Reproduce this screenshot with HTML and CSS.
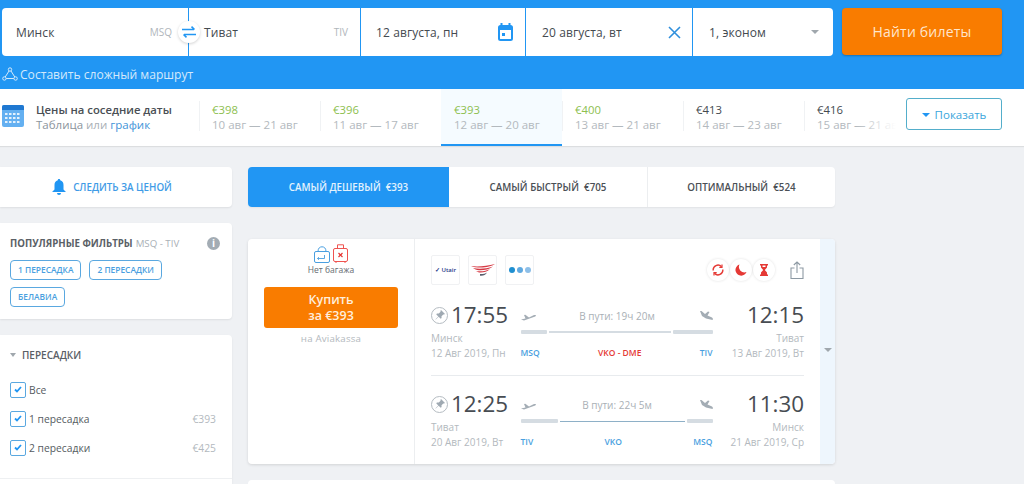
FILE: index.html
```html
<!DOCTYPE html>
<html>
<head>
<title>Минск - Тиват</title>
<link rel="stylesheet" href="styles.css">
</head>
<body>

<header class="search">
    <div class="search-row">
        <div class="fields">
            <div class="field f-from"><span class="city">Минск</span><span class="iata">MSQ</span></div>
            <div class="field f-to"><span class="city">Тиват</span><span class="iata">TIV</span>
                <div class="swap">
                    <svg width="14" height="12" viewBox="0 0 14 12" fill="none" stroke="#2196f3" stroke-width="1.6"><path d="M0 3.5h12M9.5 .6L12.5 3.5"/><path d="M14 8.5H2M4.5 11.4L1.5 8.5"/></svg>
                </div>
            </div>
            <div class="field f-date"><span class="city">12 августа, пн</span>
                <svg width="15" height="18" viewBox="0 0 15 18" fill="none"><rect x="1" y="3" width="13" height="14" rx="1.5" stroke="#2196f3" stroke-width="2"/><path d="M1 4h13v3H1z" fill="#2196f3"/><path d="M3.5 0v3M11.5 0v3" stroke="#2196f3" stroke-width="2"/><rect x="4" y="10" width="3" height="3" fill="#2196f3"/></svg>
            </div>
            <div class="field f-back"><span class="city">20 августа, вт</span>
                <svg width="13" height="13" viewBox="0 0 13 13" stroke="#2f8fdc" stroke-width="1.6"><path d="M1 1l11 11M12 1L1 12"/></svg>
            </div>
            <div class="field f-pax"><span class="city">1, эконом</span><span class="caret"></span></div>
        </div>
        <button class="find">Найти билеты</button>
    </div>
    <div class="route">
        <svg width="16" height="15" viewBox="0 0 16 15" fill="none" stroke="#d4e9fb" stroke-width="1"><circle cx="8" cy="2.5" r="1.7"/><circle cx="2.4" cy="11.5" r="1.7"/><circle cx="13.6" cy="11.5" r="1.7"/><path d="M7 4L3.2 10M9 4l3.8 6M4.2 11.5h7.6"/></svg>
        <span>Составить сложный маршрут</span>
    </div>
</header>

<section class="dates">
    <div class="dates-title">
        <svg class="dates-icon" width="22" height="22" viewBox="0 0 22 22"><rect x="0" y="0" width="22" height="22" rx="2" fill="#64b0f1"/><path d="M0 2a2 2 0 0 1 2-2h18a2 2 0 0 1 2 2v3H0z" fill="#1f78d1"/><g fill="#e3f1fd"><rect x="3" y="8" width="2.5" height="2"/><rect x="7" y="8" width="2.5" height="2"/><rect x="11" y="8" width="2.5" height="2"/><rect x="15" y="8" width="2.5" height="2"/><rect x="3" y="12" width="2.5" height="2"/><rect x="7" y="12" width="2.5" height="2"/><rect x="11" y="12" width="2.5" height="2"/><rect x="15" y="12" width="2.5" height="2"/><rect x="3" y="16" width="2.5" height="2"/><rect x="7" y="16" width="2.5" height="2"/><rect x="11" y="16" width="2.5" height="2"/><rect x="15" y="16" width="2.5" height="2"/></g></svg>
        <div class="dates-text">
            <b>Цены на соседние даты</b>
            <span>Таблица <i>или</i> <a>график</a></span>
        </div>
    </div>
    <div class="date-list">
        <div class="date-item"><span class="price cheap">€398</span><span class="range">10 авг — 21 авг</span></div>
        <div class="date-item"><span class="price cheap">€396</span><span class="range">11 авг — 17 авг</span></div>
        <div class="date-item active"><span class="price cheap">€393</span><span class="range">12 авг — 20 авг</span></div>
        <div class="date-item"><span class="price cheap">€400</span><span class="range">13 авг — 21 авг</span></div>
        <div class="date-item"><span class="price">€413</span><span class="range">14 авг — 23 авг</span></div>
        <div class="date-item last"><span class="price">€416</span><span class="range">15 авг — 21 авг</span></div>
    </div>
    <button class="show"><span class="caret blue"></span>Показать</button>
</section>

<main class="content">
    <aside class="side">
        <div class="card watch">
            <svg width="14" height="16" viewBox="0 0 14 16" fill="#2196f3"><path d="M7 0c.8 0 1.2.5 1.2 1.2C10.500 1.800 11.500 3.600 11.500 6v4.500L14 13H0l2.500-2.500V6c0-2.400 1-4.200 3.300-4.800C5.800.5 6.200 0 7 0z"/><path d="M5 14h4a2 2 0 0 1-4 0z"/></svg>
            <span>СЛЕДИТЬ ЗА ЦЕНОЙ</span>
        </div>
        <div class="card popular">
            <div class="popular-head"><b>ПОПУЛЯРНЫЕ ФИЛЬТРЫ</b> <span>MSQ - TIV</span><em>i</em></div>
            <div class="tags">
                <span class="tag">1 ПЕРЕСАДКА</span>
                <span class="tag">2 ПЕРЕСАДКИ</span>
                <span class="tag">БЕЛАВИА</span>
            </div>
        </div>
        <div class="card stops">
            <div class="stops-head"><span class="caret"></span>ПЕРЕСАДКИ</div>
            <label class="check"><span class="box"><svg width="8" height="7" viewBox="0 0 8 7" fill="none" stroke="#2196f3" stroke-width="1.800"><path d="M1 3.500l2 2 4-4.500"/></svg></span>Все</label>
            <label class="check"><span class="box"><svg width="8" height="7" viewBox="0 0 8 7" fill="none" stroke="#2196f3" stroke-width="1.800"><path d="M1 3.500l2 2 4-4.500"/></svg></span>1 пересадка<i>€393</i></label>
            <label class="check"><span class="box"><svg width="8" height="7" viewBox="0 0 8 7" fill="none" stroke="#2196f3" stroke-width="1.800"><path d="M1 3.500l2 2 4-4.500"/></svg></span>2 пересадки<i>€425</i></label>
            <div class="stops-line"></div>
        </div>
    </aside>

    <div class="results">
        <div class="tabs">
            <div class="tab active">САМЫЙ ДЕШЕВЫЙ&nbsp; €393</div>
            <div class="tab mid">САМЫЙ БЫСТРЫЙ&nbsp; €705</div>
            <div class="tab opt">ОПТИМАЛЬНЫЙ&nbsp; €524</div>
        </div>

        <article class="ticket">
            <div class="buy">
                <div class="bags">
                    <svg width="16" height="17" viewBox="0 0 16 17" fill="none" stroke="#4a9fe0"><rect x=".5" y="5.500" width="15" height="11" rx="1.500"/><path d="M4 5.500C4 2 6 .8 8 .8s4 1.200 4 4.700"/><path d="M3.500 12.500h7V9M3.500 12.500l1.500-1.300M3.500 12.500l1.500 1.300" stroke-width=".9"/></svg>
                    <svg width="15" height="19" viewBox="0 0 15 19" fill="none" stroke="#ef5350"><rect x=".5" y="4.500" width="14" height="13" rx="1.500"/><path d="M4.500 4.500V.8h6v3.700M3 17.500v1.500M12 17.500v1.500"/><path d="M5.500 9l4 4M9.500 9l-4 4" stroke="#e53935" stroke-width="1.200"/></svg>
                </div>
                <div class="bag-note">Нет багажа</div>
                <button class="buy-btn">Купить<br>за €393</button>
                <div class="seller">на Aviakassa</div>
            </div>
            <div class="info">
                <div class="top-row">
                    <div class="logo"><span class="utair"><b>✓</b> Utair</span></div>
                    <div class="logo">
                        <svg width="24" height="13" viewBox="0 0 24 13" fill="none"><path d="M0 2C7 3 16 2 24 0c-3 2-9 3.500-14 3.500C6 3.500 2 3 0 2z" fill="#d63a45"/><path d="M2 4c6 1.200 13 .8 20-1.500C18 5.500 13 6.500 8 6.300 5.500 6 3.500 5 2 4z" fill="#d63a45"/><path d="M5 7c5 .8 10 .2 14-2-3 3-7 3.800-11 3.500z" fill="#d63a45"/><path d="M9 10c3 .2 5-.4 7-1.500-1.500 2.500-4 3.700-7 3.200z" fill="#5a5f6e"/></svg>
                    </div>
                    <div class="logo dots"><i></i><i></i><i></i></div>
                    <div class="marks">
                        <span class="mark"><svg width="12" height="12" viewBox="0 0 12 12" fill="none" stroke="#e53935" stroke-width="1.400"><path d="M1.200 6.500A4.800 4.800 0 0 1 9.500 2.700M10.800 5.500A4.800 4.800 0 0 1 2.500 9.300"/><path d="M10 .5v2.800H7.300M2 11.500V8.700h2.700" stroke-width="1.200"/></svg></span>
                        <span class="mark"><svg width="12" height="12" viewBox="0 0 12 12" fill="#e53935"><path d="M4.500.5a5.700 5.700 0 1 0 7 7.500A5.500 5.500 0 0 1 4.500.5z"/></svg></span>
                        <span class="mark"><svg width="10" height="12" viewBox="0 0 10 12" fill="#e53935"><path d="M1 0h8v1.500H8V3.500L5.800 6 8 8.500v2h1V12H1v-1.500h1v-2L4.200 6 2 3.500v-2H1z"/><path d="M3.500 1.500h3v1.500h-3z" fill="#fff"/></svg></span>
                    </div>
                    <svg class="share" width="14" height="18" viewBox="0 0 14 18" fill="none" stroke="#8d99a3" stroke-width="1.100"><path d="M4.500 7H1v10.500h12V7H9.500M7 12V1M3.800 4L7 1l3.200 3"/></svg>
                </div>

                <div class="leg">
                    <div class="end">
                        <div class="time"><span class="pin"><svg width="12" height="12" viewBox="0 0 12 12" fill="#9fa9b2"><path d="M7 1l4 4-1 .6-.7-.2L7.500 7.200 7.600 9 6.700 9.800 4.600 7.700 1.800 10.500 1.500 10.200 4.300 7.400 2.200 5.300 3 4.400l1.800.1L6.600 2.700 6.400 2z"/></svg></span>17:55</div>
                        <div class="sub">Минск</div>
                        <div class="sub">12 Авг 2019, Пн</div>
                    </div>
                    <div class="path">
                        <div class="path-top">
                            <svg width="15" height="9" viewBox="0 0 15 9" fill="#a4adb5"><path d="M0 7.500l1-.3 3.500-.7L3 3l1.300-.2L8 5.500l4.500-2.200c1-.4 2.200-.3 2.500.2-.2.700-1.200 1.200-2.200 1.600L3 8.500z"/></svg>
                            <span>В пути: 19ч 20м</span>
                            <svg width="14" height="10" viewBox="0 0 14 10" fill="#a4adb5"><path d="M1 0h1.500L6 3 9 .5l1.500.5-2 3.500L13 6.500c1 .5 1.200 2 .5 2.500L7 7.500 3 5z"/></svg>
                        </div>
                        <div class="line">
                            <i class="seg" style="width:26px"></i><i class="run grey"></i><i class="seg" style="width:40px"></i>
                        </div>
                        <div class="codes"><span>MSQ</span><span class="red">VKO - DME</span><span>TIV</span></div>
                    </div>
                    <div class="end right">
                        <div class="time">12:15</div>
                        <div class="sub">Тиват</div>
                        <div class="sub">13 Авг 2019, Вт</div>
                    </div>
                </div>

                <div class="leg-line"></div>

                <div class="leg back">
                    <div class="end">
                        <div class="time"><span class="pin"><svg width="12" height="12" viewBox="0 0 12 12" fill="#9fa9b2"><path d="M7 1l4 4-1 .6-.7-.2L7.500 7.200 7.600 9 6.700 9.800 4.600 7.700 1.800 10.500 1.500 10.200 4.300 7.400 2.200 5.300 3 4.400l1.800.1L6.600 2.700 6.400 2z"/></svg></span>12:25</div>
                        <div class="sub">Тиват</div>
                        <div class="sub">20 Авг 2019, Вт</div>
                    </div>
                    <div class="path">
                        <div class="path-top">
                            <svg width="15" height="9" viewBox="0 0 15 9" fill="#a4adb5"><path d="M0 7.500l1-.3 3.500-.7L3 3l1.300-.2L8 5.500l4.500-2.200c1-.4 2.200-.3 2.500.2-.2.700-1.200 1.200-2.200 1.600L3 8.500z"/></svg>
                            <span>В пути: 22ч 5м</span>
                            <svg width="14" height="10" viewBox="0 0 14 10" fill="#a4adb5"><path d="M1 0h1.500L6 3 9 .5l1.500.5-2 3.500L13 6.500c1 .5 1.200 2 .5 2.500L7 7.500 3 5z"/></svg>
                        </div>
                        <div class="line">
                            <i class="seg" style="width:37px"></i><i class="run"></i><i class="seg" style="width:26px"></i>
                        </div>
                        <div class="codes"><span>TIV</span><span>VKO</span><span>MSQ</span></div>
                    </div>
                    <div class="end right">
                        <div class="time">11:30</div>
                        <div class="sub">Минск</div>
                        <div class="sub">21 Авг 2019, Ср</div>
                    </div>
                </div>
            </div>
            <div class="more"><span class="caret"></span></div>
        </article>

        <div class="ticket-next"></div>
    </div>
</main>

</body>
</html>
```

FILE: styles.css
```css
html, body {
    height: 484px;
    overflow: hidden;
}
body {
    margin: 0;
    background-color: #eff1f4;
    font-family: "Open Sans", "Noto Sans", sans-serif;
    color: #4a4f55;
    font-size: 12px;
}
button {
    font-family: inherit;
    border: none;
}
.caret {
    display: inline-block;
    width: 0;
    height: 0;
    border-left: 4px solid transparent;
    border-right: 4px solid transparent;
    border-top: 4px solid #a0a7ad;
}
.caret.blue {
    border-top-color: #2196f3;
    margin-right: 5px;
    vertical-align: 2px;
}

/* search bar */
.search {
    background-color: #2196f3;
    height: 89px;
    padding: 8px 0 0 2px;
    box-sizing: border-box;
}
.search-row {
    display: flex;
    height: 48px;
}
.fields {
    display: flex;
    gap: 1px;
    width: 831px;
}
.field {
    background: #fff;
    display: flex;
    align-items: center;
    justify-content: space-between;
    box-sizing: border-box;
    position: relative;
}
.city {
    font-size: 12px;
    color: #444a50;
    letter-spacing: .1px;
}
.iata {
    font-size: 10px;
    color: #b0b6bb;
}
.f-from {
    width: 186px;
    padding: 0 16px 0 14px;
    border-radius: 4px 0 0 4px;
}
.f-to {
    width: 171px;
    padding: 0 12px 0 15px;
}
.f-date {
    width: 164px;
    padding: 0 12px 0 15px;
}
.f-back {
    width: 166px;
    padding: 0 11px 0 16px;
}
.f-pax {
    width: 140px;
    padding: 0 14px 0 16px;
    border-radius: 0 4px 4px 0;
}
.swap {
    position: absolute;
    left: -11px;
    top: 13px;
    width: 22px;
    height: 22px;
    border-radius: 50%;
    background: #fff;
    box-shadow: 0 1px 3px rgba(0,0,0,.18);
    display: flex;
    align-items: center;
    justify-content: center;
}
.find {
    margin-left: 9px;
    width: 160px;
    height: 47px;
    background: #f97c00;
    color: #ffe6cc;
    font-size: 14px;
    letter-spacing: .2px;
    border-radius: 4px;
    box-shadow: 0 1px 2px rgba(0,0,0,.25);
}
.route {
    display: flex;
    align-items: center;
    gap: 2px;
    margin-top: 10px;
    color: #d4e9fb;
    font-size: 12.100px;
}

/* neighbour dates */
.dates {
    background: #fff;
    height: 57px;
    display: flex;
    align-items: stretch;
    box-shadow: 0 1px 1px rgba(0,0,0,.08);
}
.dates-title {
    width: 199px;
    padding: 14px 0 0 2px;
    box-sizing: border-box;
    display: flex;
    gap: 12px;
}
.dates-icon {
    margin-top: 2px;
}
.dates-text {
    display: flex;
    flex-direction: column;
    margin-top: -1px;
    line-height: 15px;
}
.dates-text b {
    font-weight: 600;
    font-size: 11.300px;
    color: #4a4f55;
}
.dates-text span {
    font-size: 11.500px;
    color: #8b949c;
}
.dates-text i {
    font-style: normal;
    color: #a9b0b6;
}
.dates-text a {
    color: #3f94d8;
}
.date-list {
    display: flex;
    width: 707px;
    overflow: hidden;
    position: relative;
}
.date-list::after {
    content: "";
    position: absolute;
    right: 0;
    top: 0;
    bottom: 0;
    width: 50px;
    background: linear-gradient(to right, rgba(255,255,255,0), #fff 80%);
}
.date-item {
    width: 121px;
    flex: none;
    box-sizing: border-box;
    padding: 13px 0 0 13px;
    display: flex;
    flex-direction: column;
    line-height: 15px;
    position: relative;
}
.date-item::before {
    content: "";
    position: absolute;
    left: 0;
    top: 12px;
    height: 30px;
    width: 1px;
    background: #f0f2f4;
}
.date-item.active {
    background: #f5fbff;
    border-bottom: 2px solid #2196f3;
}
.date-item.active::before {
    display: none;
}
.price {
    font-size: 11.300px;
    color: #444a50;
}
.price.cheap {
    color: #8dc04f;
}
.range {
    font-size: 11.500px;
    color: #b3b9be;
    white-space: nowrap;
}
.show {
    width: 96px;
    height: 32px;
    margin: 9px 0 0 0;
    background: #fff;
    color: #3aa6dc;
    font-size: 11.500px;
    border: 1px solid #54aecb;
    border-radius: 3px;
    padding: 0;
}

/* main columns */
.content {
    display: flex;
    gap: 16px;
    padding-top: 21px;
}
.side {
    width: 232px;
    display: flex;
    flex-direction: column;
    gap: 16px;
    flex: none;
}
.card {
    background: #fff;
    border-radius: 0 4px 4px 0;
    box-shadow: 0 1px 2px rgba(0,0,0,.08);
}
.watch {
    height: 40px;
    display: flex;
    align-items: center;
    justify-content: center;
    gap: 7px;
    color: #3f9be6;
    font-size: 9.800px;
    font-weight: 600;
    padding-right: 8px;
    box-sizing: border-box;
}
.popular {
    height: 96px;
    padding: 12px 12px 0 10px;
    box-sizing: border-box;
}
.popular-head {
    font-size: 9.700px;
    display: flex;
    align-items: center;
    gap: 3px;
    height: 16px;
}
.popular-head b {
    font-weight: 700;
    color: #5a6066;
}
.popular-head span {
    color: #a9b0b6;
}
.popular-head em {
    margin-left: auto;
    width: 13px;
    height: 13px;
    border-radius: 50%;
    background: #a3acb4;
    color: #fff;
    font-size: 10px;
    font-weight: 700;
    font-style: normal;
    text-align: center;
    line-height: 13px;
}
.tags {
    display: flex;
    flex-wrap: wrap;
    gap: 7px 8px;
    margin-top: 9px;
}
.tag {
    border: 1px solid #5aa8e0;
    border-radius: 4px;
    height: 18px;
    line-height: 18px;
    padding: 0 7px;
    font-size: 8.400px;
    font-weight: 600;
    color: #4a9fe0;
}
.stops {
    padding: 13px 16px 0 10px;
    height: 160px;
    box-sizing: border-box;
    position: relative;
}
.stops-head {
    font-size: 10px;
    font-weight: 600;
    color: #5a6066;
    display: flex;
    align-items: center;
    gap: 6px;
    margin-bottom: 13px;
}
.stops-head .caret {
    border-left-width: 3.500px;
    border-right-width: 3.500px;
}
.check {
    display: flex;
    align-items: center;
    height: 29px;
    font-size: 10.300px;
    color: #555b61;
    gap: 3px;
}
.check i {
    margin-left: auto;
    font-style: normal;
    color: #b3b9be;
}
.box {
    width: 14px;
    height: 14px;
    border: 1px solid #5aa8e0;
    border-radius: 2px;
    display: flex;
    align-items: center;
    justify-content: center;
}
.stops-line {
    position: absolute;
    left: 0;
    right: 0;
    top: 143px;
    border-top: 1px solid #eef0f2;
}

/* results */
.results {
    width: 587px;
    flex: none;
}
.tabs {
    display: flex;
    height: 40px;
    background: #fff;
    border-radius: 4px;
    box-shadow: 0 1px 2px rgba(0,0,0,.06);
    overflow: hidden;
    font-size: 9.800px;
    font-weight: 600;
    color: #4a4f55;
}
.tab {
    display: flex;
    align-items: center;
    justify-content: center;
}
.tab.active {
    width: 201px;
    background: #2196f3;
    color: #e3f2fd;
}
.tab.mid {
    width: 198px;
    border-right: 1px solid #eceef0;
}
.tab.opt {
    flex: 1;
}
.ticket {
    margin-top: 32px;
    height: 225px;
    display: flex;
    background: #fff;
    border-radius: 4px;
    box-shadow: 0 1px 3px rgba(0,0,0,.12);
    overflow: hidden;
}
.ticket-next {
    margin-top: 16px;
    height: 20px;
    background: #fff;
    border-radius: 4px;
}
.buy {
    width: 167px;
    flex: none;
    border-right: 1px solid #eceef0;
    display: flex;
    flex-direction: column;
    align-items: center;
    padding-top: 5px;
    box-sizing: border-box;
}
.bags {
    display: flex;
    align-items: flex-end;
    gap: 3px;
    height: 19px;
}
.bag-note {
    font-size: 8.500px;
    color: #666c72;
    margin-top: 0;
    line-height: 14px;
}
.buy-btn {
    margin-top: 10px;
    width: 134px;
    height: 41px;
    background: #f97c00;
    color: #ffeedd;
    font-size: 12.500px;
    font-weight: 600;
    line-height: 16px;
    border-radius: 3px;
    padding: 0;
}
.seller {
    font-size: 9.700px;
    color: #b3b9be;
    margin-top: 4px;
    letter-spacing: .2px;
}
.info {
    flex: 1;
    padding: 16px 16px 0 16px;
    box-sizing: border-box;
}
.top-row {
    display: flex;
    align-items: center;
    gap: 8px;
    height: 30px;
}
.logo {
    width: 29px;
    height: 30px;
    border: 1px solid #f0f1f3;
    border-radius: 2px;
    box-sizing: border-box;
    display: flex;
    align-items: center;
    justify-content: center;
    gap: 2px;
}
.utair {
    font-size: 6px;
    color: #1f3a8a;
    font-weight: 600;
    white-space: nowrap;
}
.utair b {
    font-size: 6px;
}
.dots i {
    width: 6px;
    height: 6px;
    border-radius: 50%;
    background: #1f8fd0;
}
.dots i:nth-child(2) {
    background: #5fa9e0;
}
.dots i:nth-child(3) {
    background: #8dbfe8;
}
.marks {
    display: flex;
    gap: 1px;
    margin-left: auto;
    margin-right: 7px;
}
.mark {
    width: 22px;
    height: 22px;
    border-radius: 50%;
    box-shadow: 0 0 3px rgba(0,0,0,.12);
    display: flex;
    align-items: center;
    justify-content: center;
}
.share {
    margin-bottom: 1px;
}
.leg {
    display: flex;
    margin-top: 16px;
    justify-content: space-between;
}
.leg.back {
    margin-top: 14px;
}
.end {
    width: 80px;
    flex: none;
}
.end.right {
    text-align: right;
    width: 76px;
}
.time {
    font-size: 22.400px;
    color: #474c52;
    line-height: 28px;
    white-space: nowrap;
    display: flex;
    align-items: center;
    gap: 3px;
    margin-bottom: 2px;
}
.end.right .time {
    justify-content: flex-end;
}
.pin {
    width: 15px;
    height: 15px;
    border: 1px solid #b5bcc2;
    border-radius: 50%;
    display: flex;
    align-items: center;
    justify-content: center;
    flex: none;
}
.sub {
    font-size: 10px;
    color: #b3b9be;
    line-height: 15px;
    white-space: nowrap;
}
.path {
    width: 192px;
    margin-left: 7px;
    margin-right: 13px;
    padding-top: 5px;
    flex: none;
}
.path-top {
    display: flex;
    align-items: center;
    justify-content: space-between;
    height: 20px;
    font-size: 10px;
    color: #a9b0b6;
}
.line {
    display: flex;
    align-items: center;
    gap: 2px;
    height: 4px;
    margin-top: 4px;
}
.seg {
    height: 4px;
    background: #d5dce2;
    border-radius: 1px;
    flex: none;
}
.run {
    flex: 1;
    height: 1px;
    background: #8eb0c7;
}
.run.grey {
    height: 2px;
    background: #d5dce2;
}
.codes {
    display: flex;
    justify-content: space-between;
    font-size: 8.500px;
    font-weight: 600;
    color: #4a9fe0;
    margin-top: 13px;
}
.codes .red {
    color: #e53935;
}
.leg-line {
    border-top: 1px solid #e8ebee;
    margin-top: 14px;
}
.more {
    width: 15px;
    flex: none;
    background: #eef6fd;
    display: flex;
    align-items: center;
    justify-content: center;
    padding-bottom: 4px;
    box-sizing: border-box;
}
```
